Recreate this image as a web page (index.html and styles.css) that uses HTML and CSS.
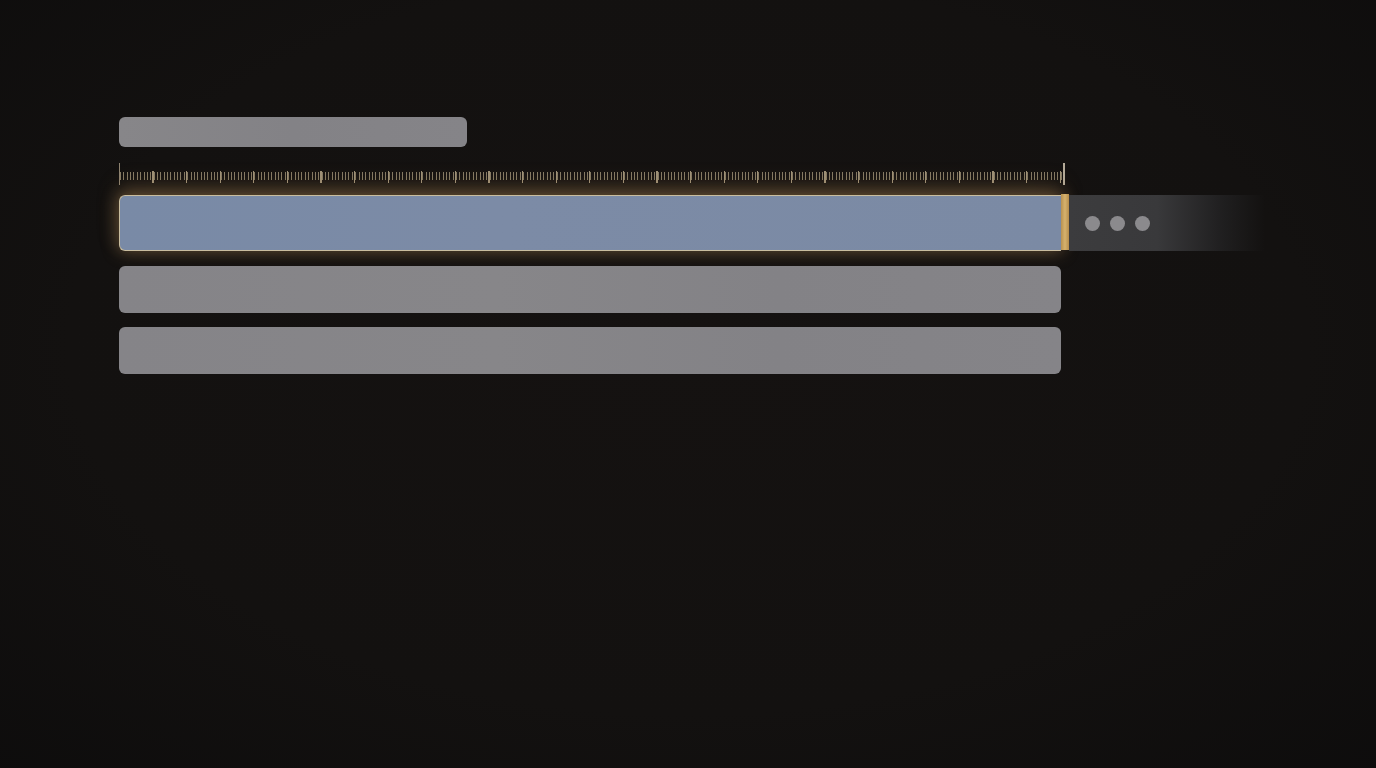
FILE: index.html
```html
<!DOCTYPE html>
<html lang="en">
<head>
<meta charset="utf-8">
<title>List</title>
<link rel="stylesheet" href="styles.css">
</head>
<body>
<div class="page">
  <div class="title"></div>
  <div class="ruler"><span class="tick-end tick-left"></span><span class="ticks"></span><span class="tick-end tick-right"></span></div>
  <div class="row-selected">
    <div class="bar bar-active"></div>
    <div class="handle"></div>
    <div class="more">
      <span class="dot"></span><span class="dot"></span><span class="dot"></span>
    </div>
  </div>
  <div class="bar bar-plain first"></div>
  <div class="bar bar-plain second"></div>
</div>
</body>
</html>
```
FILE: styles.css
```css
html, body {
  margin: 0;
  padding: 0;
  height: 100%;
}
body {
  background: #131110;
  font-family: "Liberation Sans", Arial, sans-serif;
  overflow: hidden;
}
.page {
  position: relative;
  height: 768px;
  box-sizing: border-box;
  padding: 117px 0 0 119px;
  display: flex;
  flex-direction: column;
  align-items: flex-start;
  background: radial-gradient(ellipse 75% 80% at 50% 45%, #151211 0%, #131110 60%, #0d0c0c 100%);
}
.title {
  width: 348px;
  height: 30px;
  border-radius: 6px;
  background: linear-gradient(90deg, #878689, #838286 50%, #858488);
  margin-bottom: 16px;
}
.ruler {
  width: 946px;
  height: 22px;
  display: flex;
  align-items: stretch;
  margin-bottom: 10px;
}
.tick-end {
  width: 2px;
  background: #9e927c;
}
.tick-left { width: 1px; background: #8e8370; }
.tick-right { width: 2px; background: #b4aa98; }
.ticks {
  flex: 1;
  background:
    repeating-linear-gradient(90deg, transparent 0, transparent 32.5px, #9f9278 32.5px, #9f9278 33.6px) 0 8px / 100% 12px no-repeat,
    repeating-linear-gradient(90deg, #857a64 0, #857a64 1px, transparent 1px, transparent 3.36px) 0 9px / 100% 8px no-repeat;
}
.row-selected {
  display: flex;
  align-items: stretch;
  height: 56px;
  margin-bottom: 15px;
}
.bar {
  border-radius: 6px;
}
.bar-active {
  width: 942px;
  box-sizing: border-box;
  border: 1.5px solid #c9bd9f;
  border-right: none;
  border-radius: 6px 0 0 6px;
  background: linear-gradient(90deg, #798aa6 0%, #7c8ba6 40%, #7b8aa4 100%);
  box-shadow: 0 0 16px 2px rgba(190, 150, 95, 0.36), 0 -10px 22px rgba(150, 115, 70, 0.25);
}
.handle {
  width: 8px;
  margin-top: -1px;
  margin-bottom: 1px;
  background: linear-gradient(90deg, #b8914f, #d6b26e 50%, #b58c4a);
}
.more {
  width: 180px;
  display: flex;
  align-items: center;
  gap: 10px;
  padding-left: 16px;
  background: linear-gradient(90deg, #3c3c3e 0%, #39393b 45%, rgba(40,40,42,0.6) 78%, rgba(20,18,18,0) 100%);
}
.dot {
  width: 15px;
  height: 15px;
  border-radius: 50%;
  background: #8b8a8d;
}
.bar-plain {
  width: 942px;
  height: 47px;
  background: linear-gradient(90deg, #858488, #878689 40%, #838286 70%, #858488);
}
.bar-plain.first {
  margin-bottom: 14px;
}
```
